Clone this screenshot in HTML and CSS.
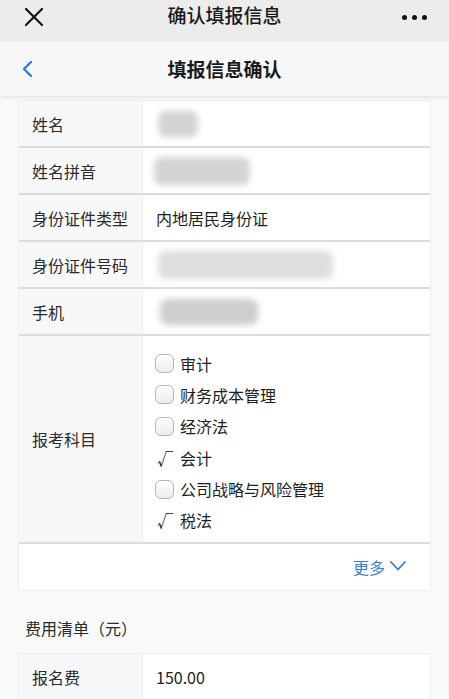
FILE: index.html
```html
<!DOCTYPE html>
<html lang="zh">
<head>
<meta charset="utf-8">
<title>确认填报信息</title>
<link rel="stylesheet" href="styles.css">
</head>
<body>
<div class="topbar">
  <svg class="close" width="20" height="20" viewBox="0 0 20 20"><path d="M2 2 L18 18 M18 2 L2 18" stroke="#111" stroke-width="2.2" stroke-linecap="round"/></svg>
  <div class="toptitle">确认填报信息</div>
  <div class="dots"><span></span><span></span><span></span></div>
</div>
<div class="navbar">
  <svg class="back" width="12" height="18" viewBox="0 0 12 18"><path d="M10 2 L3 9 L10 16" fill="none" stroke="#2f7be6" stroke-width="2.4" stroke-linecap="round" stroke-linejoin="round"/></svg>
  <div class="navtitle">填报信息确认</div>
</div>
<main class="content">
  <div class="table">
    <div class="row"><div class="label">姓名</div><div class="value"><div class="blur b1"></div></div></div>
    <div class="row"><div class="label">姓名拼音</div><div class="value"><div class="blur b2"></div></div></div>
    <div class="row"><div class="label">身份证件类型</div><div class="value">内地居民身份证</div></div>
    <div class="row"><div class="label">身份证件号码</div><div class="value"><div class="blur b4"></div></div></div>
    <div class="row"><div class="label">手机</div><div class="value"><div class="blur b5"></div></div></div>
    <div class="row tall"><div class="label">报考科目</div>
      <div class="value list">
        <div class="opt"><span class="box"></span>审计</div>
        <div class="opt"><span class="box"></span>财务成本管理</div>
        <div class="opt"><span class="box"></span>经济法</div>
        <div class="opt"><span class="tick">√</span>会计</div>
        <div class="opt"><span class="box"></span>公司战略与风险管理</div>
        <div class="opt"><span class="tick">√</span>税法</div>
      </div>
    </div>
    <div class="more">更多<svg width="18" height="12" viewBox="0 0 18 12"><path d="M2 2 L9 9.5 L16 2" fill="none" stroke="#3a7bd5" stroke-width="1.8" stroke-linecap="round" stroke-linejoin="round"/></svg></div>
  </div>
  <div class="section">费用清单（元）</div>
  <div class="table">
    <div class="row"><div class="label">报名费</div><div class="value">150.00</div></div>
  </div>
</main>
</body>
</html>
```
FILE: styles.css
```css
* { box-sizing: border-box; }
html, body { margin: 0; padding: 0; }
body {
  width: 449px;
  height: 699px;
  overflow: hidden;
  background: #f9f9f9;
  font-family: "Noto Sans CJK SC", "Noto Sans", sans-serif;
  color: #222;
}
.topbar {
  height: 42px;
  background: #ececec;
  display: flex;
  align-items: center;
  justify-content: space-between;
  padding: 0 22px 8px 24px;
  position: relative;
}
.close { display: block; }
.toptitle {
  position: absolute;
  left: 0; right: 0; top: 2px;
  text-align: center;
  font-size: 19px;
  line-height: 26px;
  font-weight: 500;
  color: #1a1a1a;
  pointer-events: none;
}
.dots { display: flex; gap: 5px; }
.dots span { width: 5px; height: 5px; border-radius: 50%; background: #111; }
.navbar {
  height: 54px;
  background: #f7f7f7;
  display: flex;
  align-items: center;
  padding-left: 21px;
  position: relative;
  box-shadow: 0 2px 3px rgba(0,0,0,0.08);
  z-index: 1;
}
.navtitle {
  position: absolute;
  left: 0; right: 0; top: 14px;
  text-align: center;
  font-size: 19px;
  line-height: 26px;
  font-weight: 700;
  color: #1a1a1a;
}
.content { padding: 4px 18px 0 18px; }
.table {
  background: #fff;
  border: 1px solid #eeeeee;
}
.row {
  display: flex;
  height: 47px;
  border-bottom: 2px solid #dcdcdc;
}
.row.tall { height: 208px; }
.label {
  width: 124px;
  flex: none;
  background: #f7f8fa;
  display: flex;
  align-items: center;
  padding-left: 13px;
  font-size: 16px;
  color: #2a2a2a;
  border-right: 1px solid #eeeeee;
}
.value {
  flex: 1;
  display: flex;
  align-items: center;
  padding-left: 13px;
  font-size: 16px;
  color: #1e1e1e;
}
.blur { background: #d4d4d4; filter: blur(3px); border-radius: 8px; }
.b1 { width: 40px; height: 26px; margin-left: 2px; }
.b2 { width: 96px; height: 28px; margin-left: -2px; }
.b4 { width: 175px; height: 28px; margin-left: 2px; background: #dedede; }
.b5 { width: 98px; height: 26px; margin-left: 4px; background: #cdcdcd; }
.list {
  flex-direction: column;
  align-items: flex-start;
  justify-content: center;
  gap: 7.4px;
  padding-top: 6px;
  padding-left: 12px;
}
.opt {
  display: flex;
  align-items: center;
  height: 24px;
  line-height: 24px;
  font-size: 16px;
  color: #1e1e1e;
}
.box {
  width: 19px;
  height: 19px;
  border: 1px solid #b5b5b5;
  border-radius: 6px;
  background: linear-gradient(#ffffff, #ececec);
  margin-right: 6px;
}
.tick {
  width: 25px;
  font-size: 16px;
  color: #111;
  padding-left: 2px;
}
.more {
  height: 46px;
  display: flex;
  align-items: center;
  justify-content: flex-end;
  padding-right: 23px;
  gap: 4px;
  font-size: 16px;
  color: #3a7bd5;
}
.more svg { margin-top: -2px; }
.section {
  height: 62px;
  display: flex;
  align-items: center;
  padding-left: 7px;
  padding-top: 12px;
  font-size: 16px;
  color: #2a2a2a;
}
```
